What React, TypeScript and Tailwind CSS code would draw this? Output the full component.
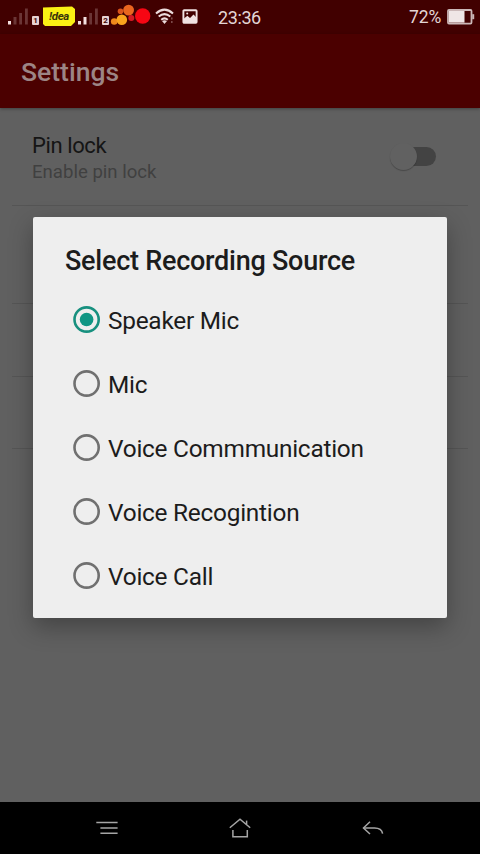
import { useState } from "react";

const sources = [
  "Speaker Mic",
  "Mic",
  "Voice Commmunication",
  "Voice Recogintion",
  "Voice Call",
];

function SignalBars({ strong }: { strong?: boolean }) {
  return (
    <svg width="21" height="17" viewBox="0 0 21 17" fill="#6b3535">
      <rect x="0" y="13" width="3" height="3.5" fill="#f3dfdf" />
      <rect x="5.5" y="9" width="3" height="7.5" fill={strong ? "#f3dfdf" : "#6b3535"} />
      <rect x="11.2" y="5" width="2.8" height="11.5" />
      <rect x="17" y="0.5" width="2.8" height="16" />
    </svg>
  );
}

function SimBadge({ n }: { n: number }) {
  return (
    <span className="mt-[16px] flex h-[9px] w-[7px] items-center justify-center rounded-[1px] bg-[#e6d2d2] text-[8px] leading-none font-bold text-[#410000]">
      {n}
    </span>
  );
}

function StatusBar() {
  return (
    <div className="flex h-[34px] items-start bg-[#410000] pr-[5px] pl-[8px] text-[#e3d6d6]">
      <div className="mt-[8px] w-6">
        <SignalBars />
      </div>
      <SimBadge n={1} />
      <div className="relative mt-[6px] ml-[3px] h-[21px] w-[34px]">
        <svg className="absolute inset-0" width="34" height="21" viewBox="0 0 34 21">
          <path d="M1 1.5 L30 0.5 L33 3 V16 L29 20 H3 L1 18 Z" fill="#faf014" />
        </svg>
        <span className="relative flex h-[21px] items-center justify-center text-[11.5px] font-bold tracking-[-0.3px] text-[#39340a] italic">
          !dea
        </span>
      </div>
      <div className="mt-[8px] ml-[2px] w-6">
        <SignalBars strong />
      </div>
      <SimBadge n={2} />
      <svg className="mt-[3px] ml-[1px]" width="42" height="26" viewBox="110 3 42 26">
        <circle cx="120.5" cy="11.3" r="2.8" fill="#d9531c" />
        <circle cx="128.6" cy="10.1" r="5.4" fill="#ea651f" />
        <circle cx="131.3" cy="18" r="3" fill="#d51a24" />
        <circle cx="114.2" cy="21.5" r="3.3" fill="#f08a1c" />
        <circle cx="121.8" cy="19.7" r="5.3" fill="#faa41d" />
        <circle cx="142.7" cy="16" r="7.7" fill="#f70613" />
      </svg>
      <svg className="mt-[7px] ml-[3px]" width="20" height="19" viewBox="155 7 20 19" fill="none" stroke="#ecdcdc" strokeWidth="2">
        <path d="M156 13.4 Q164.5 5.8 173 13.4" />
        <path d="M158.7 16.6 Q164.5 11.6 170.3 16.6" />
        <path d="M161.2 19.7 Q164.5 17 167.8 19.7" />
        <path d="M162 21 L164.5 24 L167 21 Q164.5 19.4 162 21Z" fill="#ecdcdc" stroke="none" />
        <path d="M171.8 17.5 V19.5 M171.8 21 V23" stroke="#7c4a4a" strokeWidth="1.6" />
      </svg>
      <svg className="mt-[9px] ml-[7px]" width="16" height="15" viewBox="0 0 16 15">
        <rect x="1.4" y="1.2" width="13.2" height="12.6" rx="0.8" fill="none" stroke="#f0e2e2" strokeWidth="1.9" />
        <path d="M2 13 V9.5 L5.4 6.8 L8 9 L11.5 5.5 L14 8 V13 Z" fill="#f0e2e2" />
        <circle cx="5.2" cy="4.6" r="1" fill="#f0e2e2" />
      </svg>
      <span className="ml-[20px] h-[34px] text-[18px] leading-[35px] tracking-[-0.4px]">23:36</span>
      <span className="ml-auto h-[34px] text-[17.5px] leading-[34px] tracking-[-0.2px]">72%</span>
      <svg className="mt-[9px] ml-[6px]" width="28" height="16" viewBox="0 0 28 16">
        <rect x="1" y="1" width="23.5" height="13.6" rx="1" fill="none" stroke="#cbb8b8" strokeWidth="1.8" />
        <rect x="2" y="2" width="15.5" height="11.6" fill="#efe6e6" />
        <rect x="25.2" y="5.2" width="2" height="5" fill="#cbb8b8" />
      </svg>
    </div>
  );
}

function NavBar() {
  return (
    <div className="flex h-[52px] items-center bg-black px-[41px]">
      <div className="flex flex-1 justify-center">
        <svg width="22" height="20" viewBox="0 0 22 20" stroke="#a5a5a5" strokeWidth="1.6">
          <path d="M0.3 4.5 H21.6 M4.4 10 H21.6 M4.4 15.3 H21.6" />
        </svg>
      </div>
      <div className="flex flex-1 justify-center">
        <svg width="22" height="20" viewBox="0 0 22 20" fill="none" stroke="#a5a5a5" strokeWidth="1.5">
          <path d="M0.8 9.8 L11 1.2 L21.2 9.8" />
          <path d="M17.6 6.4 V2.6" />
          <path d="M3.9 12 V18.7 H18.3 V12" />
        </svg>
      </div>
      <div className="flex flex-1 justify-center">
        <svg width="22" height="20" viewBox="0 0 22 20" fill="none" stroke="#a5a5a5" strokeWidth="1.5">
          <path d="M8 3.8 L1.5 10 L8 16" />
          <path d="M1.5 10 H12.5 C17.5 10 20 12 20.6 15.6" />
        </svg>
      </div>
    </div>
  );
}

export default function App() {
  const [selected, setSelected] = useState(0);

  return (
    <div className="relative flex h-[854px] w-[480px] flex-col overflow-hidden bg-[#606060] font-['Roboto',sans-serif]">
      <StatusBar />
      <header className="flex h-[74px] items-center bg-[#4b0000] px-[21px] pt-[2px] shadow-[0_1px_3px_rgba(0,0,0,0.35)]">
        <h1 className="text-[26.5px] leading-none font-medium text-[#9c8585]">Settings</h1>
      </header>

      <main className="flex-1 px-3">
        <div className="flex h-[98px] items-center justify-between border-b border-[#555] pr-[32px] pl-5">
          <div className="pt-[4px]">
            <p className="text-[22px] leading-[27px] tracking-[-0.4px] text-[#151515]">Pin lock</p>
            <p className="text-[18.6px] leading-[27px] text-[#404040]">Enable pin lock</p>
          </div>
          <div className="flex h-[27px] w-[46px] items-center">
            <span className="z-10 size-[27px] shrink-0 rounded-full bg-[#616161] shadow-[0_1px_1px_rgba(0,0,0,0.25)]" />
            <span className="-ml-[14px] h-[19px] w-[33px] rounded-full bg-[#434343]" />
          </div>
        </div>
        <div className="h-[98px] border-b border-[#555]" />
        <div className="h-[73px] border-b border-[#555]" />
        <div className="h-[72px] border-b border-[#555]" />
      </main>

      <NavBar />

      <div
        role="dialog"
        className="absolute top-[217px] left-[33px] h-[401px] w-[414px] rounded-[2px] bg-[#eeeeee] shadow-[0_9px_24px_rgba(0,0,0,0.3)]"
      >
        <h2 className="pt-[28px] pl-[32px] text-[27px] leading-[32px] font-medium tracking-[-0.25px] text-[#1c1c1c]">
          Select Recording Source
        </h2>
        <div className="mt-[11px] pl-[40px]">
          {sources.map((source, i) => (
            <button
              key={source}
              onClick={() => setSelected(i)}
              className="flex h-16 w-full items-center text-left"
            >
              <svg width="28" height="28" viewBox="0 0 28 28" fill="none">
                <circle cx="13.6" cy="13.5" r="12.1" strokeWidth="2.6" stroke={i === selected ? "#17907f" : "#707070"} />
                {i === selected && <circle cx="13.6" cy="13.5" r="6.8" fill="#109684" />}
              </svg>
              <span className="ml-[7px] pt-px text-[24.4px] leading-[24px] tracking-[-0.25px] text-[#1c1c1c]">
                {source}
              </span>
            </button>
          ))}
        </div>
      </div>
    </div>
  );
}
